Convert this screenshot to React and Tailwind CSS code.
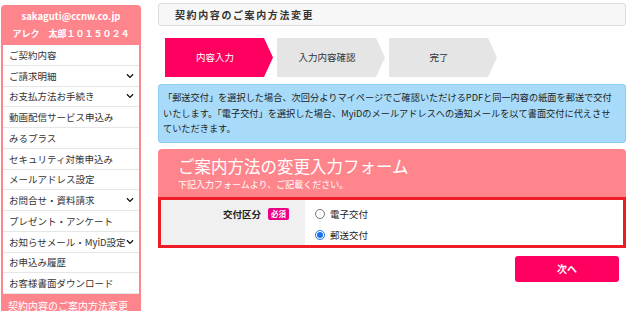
import React from 'react';
import { FaChevronDown } from 'react-icons/fa';

const font = { fontFamily: '"Noto Sans CJK JP", "Noto Sans", sans-serif' };

const menu = [
  { label: 'ご契約内容' },
  { label: 'ご請求明細', more: true },
  { label: 'お支払方法お手続き', more: true },
  { label: '動画配信サービス申込み' },
  { label: 'みるプラス' },
  { label: 'セキュリティ対策申込み' },
  { label: 'メールアドレス設定' },
  { label: 'お問合せ・資料請求', more: true },
  { label: 'プレゼント・アンケート' },
  { label: 'お知らせメール・MyiD設定', more: true },
  { label: 'お申込み履歴' },
  { label: 'お客様書面ダウンロード' },
];

function Sidebar() {
  return (
    <aside className="ml-[1px] mt-[5px] w-[140px] shrink-0">
      <div className="rounded-t-[4px] bg-[#ff858d] pt-[2px] pb-[3px] text-center font-bold text-white">
        <div className="h-[18px] text-[9.5px] leading-[18px]">sakaguti@ccnw.co.jp</div>
        <div className="h-[17px] whitespace-nowrap text-[9px] leading-[17px]">アレク　太郎１０１５０２４</div>
      </div>
      <ul className="border-x-2 border-[#ff858d] bg-white">
        {menu.map((m) => (
          <li key={m.label} className="flex h-[20.75px] items-center justify-between border-b border-[#e6e6e6] pl-[6px] pr-[5px] text-[9.5px] text-[#333]">
            <span className="whitespace-nowrap">{m.label}</span>
            {m.more && <FaChevronDown className="shrink-0 text-[8px] text-[#111]" />}
          </li>
        ))}
      </ul>
      <div className="flex h-[22px] items-center bg-[#ff858d] pl-[7px] text-[10px] text-white">契約内容のご案内方法変更</div>
    </aside>
  );
}

function Step({ label, active }) {
  return (
    <div
      className={`flex h-[39px] w-[108px] items-center justify-center pr-[8px] text-[9.5px] [clip-path:polygon(0_0,calc(100%-9px)_0,100%_50%,calc(100%-9px)_100%,0_100%)] ${active ? 'bg-[#ff0060] text-white' : 'bg-[#e5e5e5] text-[#333]'}`}
    >
      {label}
    </div>
  );
}

export default function App() {
  return (
    <div className="flex h-[311px] w-[629px] overflow-hidden bg-white" style={font}>
      <Sidebar />
      <main className="ml-[17px] mt-[3px] w-[468px]">
        {/* page title */}
        <div className="flex h-[23px] items-center rounded-[3px] border border-[#dcdcdc] bg-[#f7f7f7] pl-[16px] text-[10px] font-bold tracking-[1.6px] text-[#333]">
          契約内容のご案内方法変更
        </div>

        {/* steps */}
        <div className="mt-[12px] flex gap-[4px] pl-[7px]">
          <Step label="内容入力" active />
          <Step label="入力内容確認" />
          <Step label="完了" />
        </div>

        {/* notice */}
        <div className="mt-[7px] rounded-[3px] border border-[#8ccdf3] bg-[#a8dbf9] pl-[4px] pr-[12px] pt-[5px] pb-[5px] text-[9.2px] leading-[15.5px] text-[#222]">
          「郵送交付」を選択した場合、次回分よりマイページでご確認いただけるPDFと同一内容の紙面を郵送で交付いたします。「電子交付」を選択した場合、MyiDのメールアドレスへの通知メールを以て書面交付に代えさせていただきます。
        </div>

        {/* form */}
        <div className="mt-[6px] rounded-t-[4px] bg-[#ff858d] pl-[20px] pt-[5px] pb-[5px] text-white">
          <div className="text-[16.5px] leading-[24px]">ご案内方法の変更入力フォーム</div>
          <div className="text-[9px] leading-[14px]">下記入力フォームより、ご記載ください。</div>
        </div>
        <div className="flex h-[51px] border-[3px] border-[#ee1c25]">
          <div className="flex w-[144px] items-start justify-end gap-[7px] bg-[#f0f0f0] pr-[16px] pt-[7px]">
            <span className="text-[9.5px] font-bold leading-[14px] text-[#222]">交付区分</span>
            <span className="mt-[1px] rounded-[2px] bg-[#ea0085] px-[3px] text-[7.5px] font-bold leading-[12px] text-white">必須</span>
          </div>
          <div className="flex flex-1 flex-col gap-[7px] bg-white pl-[10px] pt-[7px]">
            <label className="flex items-center gap-[5px] text-[9.5px] leading-[14px] text-[#222]">
              <input type="radio" name="kofu" className="m-0 h-[10px] w-[10px]" />
              電子交付
            </label>
            <label className="flex items-center gap-[5px] text-[9.5px] leading-[14px] text-[#222]">
              <input type="radio" name="kofu" defaultChecked className="m-0 h-[10px] w-[10px] accent-[#1a73e8]" />
              郵送交付
            </label>
          </div>
        </div>

        <div className="mt-[8px] flex justify-end pr-[7px]">
          <button className="h-[26px] w-[104px] rounded-[3px] bg-[#ff0060] text-[10px] font-bold text-white">次へ</button>
        </div>
      </main>
    </div>
  );
}
